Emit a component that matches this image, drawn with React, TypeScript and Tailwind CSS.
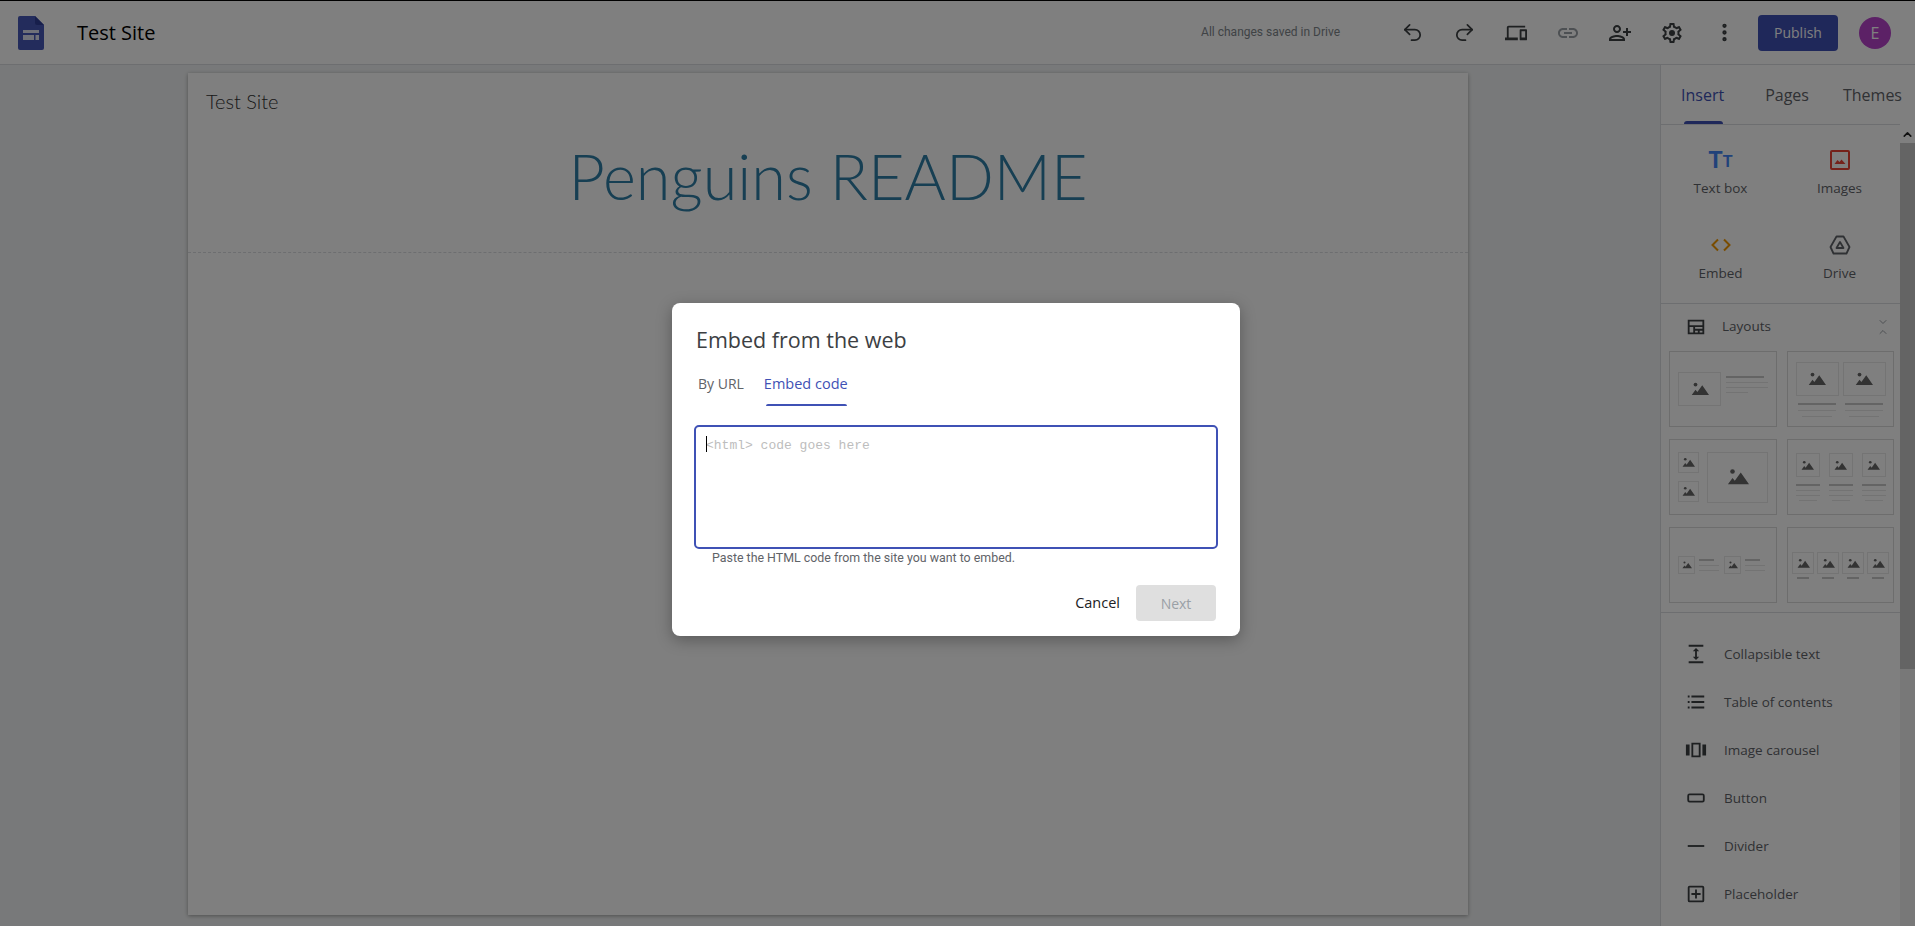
import { ReactNode } from "react";
import { Undo2, Redo2, MoreVertical, ChevronUp, ChevronDown } from "lucide-react";

const roboto = "font-['Roboto',sans-serif]";

function Mat({ d, size = 24, className = "" }: { d: string; size?: number; className?: string }) {
  return (
    <svg width={size} height={size} viewBox="0 0 24 24" fill="currentColor" className={className}>
      <path d={d} />
    </svg>
  );
}

const ICONS = {
  devices:
    "M4 6h18V4H4c-1.1 0-2 .9-2 2v11H0v3h14v-3H4V6zm19 2h-6c-.55 0-1 .45-1 1v10c0 .55.45 1 1 1h6c.55 0 1-.45 1-1V9c0-.55-.45-1-1-1zm-1 9h-4v-7h4v7z",
  link:
    "M3.9 12c0-1.71 1.39-3.1 3.1-3.1h4V7H7c-2.76 0-5 2.24-5 5s2.24 5 5 5h4v-1.9H7c-1.71 0-3.1-1.39-3.1-3.1zM8 13h8v-2H8v2zm9-6h-4v1.9h4c1.71 0 3.1 1.39 3.1 3.1s-1.39 3.1-3.1 3.1h-4V17h4c2.76 0 5-2.24 5-5s-2.24-5-5-5z",
  personAdd:
    "M15 12c2.21 0 4-1.79 4-4s-1.79-4-4-4-4 1.79-4 4 1.79 4 4 4zm0-6c1.1 0 2 .9 2 2s-.9 2-2 2-2-.9-2-2 .9-2 2-2zm0 8c-2.67 0-8 1.34-8 4v2h16v-2c0-2.66-5.33-4-8-4zm-6 4c.22-.72 3.31-2 6-2 2.7 0 5.8 1.29 6 2H9zm-3-3v-3h3v-2H6V7H4v3H1v2h3v3h2z",
  settings:
    "M19.43 12.98c.04-.32.07-.64.07-.98 0-.34-.03-.66-.07-.98l2.11-1.65c.19-.15.24-.42.12-.64l-2-3.46c-.09-.16-.26-.25-.44-.25-.06 0-.12.01-.17.03l-2.49 1c-.52-.4-1.08-.73-1.69-.98l-.38-2.65C14.46 2.18 14.25 2 14 2h-4c-.25 0-.46.18-.49.42l-.38 2.65c-.61.25-1.17.59-1.69.98l-2.49-1c-.06-.02-.12-.03-.18-.03-.17 0-.34.09-.43.25l-2 3.46c-.13.22-.07.49.12.64l2.11 1.65c-.04.32-.07.65-.07.98 0 .33.03.66.07.98l-2.11 1.65c-.19.15-.24.42-.12.64l2 3.46c.09.16.26.25.44.25.06 0 .12-.01.17-.03l2.49-1c.52.4 1.08.73 1.69.98l.38 2.65c.03.24.24.42.49.42h4c.25 0 .46-.18.49-.42l.38-2.65c.61-.25 1.17-.59 1.69-.98l2.49 1c.06.02.12.03.18.03.17 0 .34-.09.43-.25l2-3.46c.12-.22.07-.49-.12-.64l-2.11-1.65zm-1.98-1.71c.04.31.05.52.05.73 0 .21-.02.43-.05.73l-.14 1.13.89.7 1.08.84-.7 1.21-1.27-.51-1.04-.42-.9.68c-.43.32-.84.56-1.25.73l-1.06.43-.16 1.13-.2 1.35h-1.4l-.19-1.35-.16-1.13-1.06-.43c-.43-.18-.83-.41-1.23-.71l-.91-.7-1.06.43-1.27.51-.7-1.21 1.08-.84.89-.7-.14-1.13c-.03-.31-.05-.54-.05-.74s.02-.43.05-.73l.14-1.13-.89-.7-1.08-.84.7-1.21 1.27.51 1.04.42.9-.68c.43-.32.84-.56 1.25-.73l1.06-.43.16-1.13.2-1.35h1.39l.19 1.35.16 1.13 1.06.43c.43.18.83.41 1.23.71l.91.7 1.06-.43 1.27-.51.7 1.21-1.07.85-.89.7.14 1.13z",
  layouts: "M3 4h18v16H3V4zm2 2v4h14V6H5zm0 6v6h4v-6H5zm6 0v2h8v-2h-8zm0 4v2h3v-2h-3zm5 0v2h3v-2h-3z",
  collapsible: "M4 2h16v2H4V2zm0 18h16v2H4v-2zm8-14.5L15.5 9H13v6h2.5L12 18.500 8.500 15H11V9H8.500L12 5.500z",
  toc: "M7 5h14v2H7V5zm0 6h14v2H7v-2zM7 17h14v2H7v-2zM3 5h2v2H3V5zm0 6h2v2H3v-2zm0 6h2v2H3v-2z",
  carousel: "M1 6h4v12H1V6zm18 0h4v12h-4V6zM7 4h10v16H7V4zm2 2v12h6V6H9z",
  button: "M5 7h14a2.500 2.500 0 0 1 2.500 2.500v5A2.500 2.500 0 0 1 19 17H5a2.500 2.500 0 0 1-2.500-2.500v-5A2.500 2.500 0 0 1 5 7zm0 2c-.3 0-.5.2-.5.5v5c0 .3.2.5.5.5h14c.3 0 .5-.2.5-.5v-5c0-.3-.2-.5-.5-.5H5z",
  divider: "M3 11h18v2H3z",
  placeholder:
    "M5 3h14a2 2 0 0 1 2 2v14a2 2 0 0 1-2 2H5a2 2 0 0 1-2-2V5a2 2 0 0 1 2-2zm0 2v14h14V5H5zm6 2h2v4h4v2h-4v4h-2v-4H7v-2h4V7z",
};

function Mountain({ size }: { size: number }) {
  return (
    <svg width={size} height={size} viewBox="0 0 24 24" fill="#666666">
      <circle cx="6" cy="6" r="2.500" />
      <path d="M1 20l5-7 2.500 3L15 7l9 13H1z" />
    </svg>
  );
}

function Pic({ w, h, icon }: { w: number; h: number; icon: number }) {
  return (
    <div className="flex shrink-0 items-center justify-center border border-[#e8e8e8]" style={{ width: w, height: h }}>
      <Mountain size={icon} />
    </div>
  );
}

function Line({ w, dark, center }: { w: number; dark?: boolean; center?: boolean }) {
  return <div className={`${dark ? "h-[2px] bg-[#c8c8c8]" : "h-px bg-[#e6e6e6]"} ${center ? "mx-auto" : ""}`} style={{ width: w }} />;
}

function Thumb({ children, className = "" }: { children: ReactNode; className?: string }) {
  return <div className={`h-[76px] border border-[#dadada] ${className}`}>{children}</div>;
}

function ListRow({ d, label }: { d: string; label: string }) {
  return (
    <div className="flex h-[48px] items-center">
      <div className="flex w-[63px] justify-center pl-[6px] text-[#3c4043]">
        <Mat d={d} size={22} />
      </div>
      <span className="text-[13.500px] text-[#5f6368]">{label}</span>
    </div>
  );
}

function Tool({ children, label }: { children: ReactNode; label: string }) {
  return (
    <div className="flex h-[85px] flex-col items-center pt-[13px]">
      <div className="flex h-[28px] items-center justify-center">{children}</div>
      <span className="mt-[5px] text-[13.500px] leading-[18px] text-[#5f6368]">{label}</span>
    </div>
  );
}

function Sidebar() {
  return (
    <aside className="flex w-[255px] shrink-0 border-l border-[#dadce0] bg-white">
      <div className="flex min-w-0 flex-1 flex-col">
        <div className="flex h-[60px] shrink-0 items-center border-b border-[#dadce0] text-[16px] font-medium">
          <div className="relative ml-[20px] flex h-full w-[44px] items-center justify-center text-[#3f51b5]">
            Insert
            <div className="absolute bottom-0 left-[3px] h-[3px] w-[39px] rounded-t-[3px] bg-[#3f51b5]" />
          </div>
          <span className="ml-[41px] text-[#5f6368]">Pages</span>
          <span className="ml-[34px] text-[#5f6368]">Themes</span>
        </div>
        <div className="grid grid-cols-2 border-b border-[#dadce0] pr-[1px] pt-[8px]">
          <Tool label="Text box">
            <span className="flex items-end font-['Liberation_Sans',sans-serif] font-bold leading-none text-[#4285f4]">
              <span className="text-[23px] leading-[18px]">T</span>
              <span className="text-[16px] leading-[14px]">T</span>
            </span>
          </Tool>
          <Tool label="Images">
            <svg width="20" height="20" viewBox="0 0 20 20" fill="none">
              <rect x="1" y="1" width="18" height="18" rx="1" stroke="#ea4335" strokeWidth="2" />
              <path d="M4.500 14l3-4 2 2 2-2.500 4 4.500h-11z" fill="#ea4335" />
            </svg>
          </Tool>
          <Tool label="Embed">
            <svg width="22" height="16" viewBox="0 0 22 16" fill="none" stroke="#f29900" strokeWidth="2">
              <path d="M8 2.500L2.500 8 8 13.500M14 2.500L19.500 8 14 13.500" />
            </svg>
          </Tool>
          <Tool label="Drive">
            <svg width="22" height="20" viewBox="0 0 22 20" fill="none" stroke="#5f6368" strokeWidth="1.800" strokeLinejoin="round">
              <path d="M7.500 1.500h7L20.500 12l-3 6.500h-13L1.500 12z" />
              <path d="M11 7l3.500 6h-7z" />
            </svg>
          </Tool>
        </div>
        <div className="flex h-[47px] items-center pb-[2px] pl-[24px] pr-[11px]">
          <Mat d={ICONS.layouts} size={22} className="text-[#3c4043]" />
          <span className="ml-[15px] flex-1 text-[13.500px] text-[#5f6368]">Layouts</span>
          <div className="flex flex-col text-[#9aa0a6]">
            <ChevronDown size={12} className="-mb-[2px]" />
            <ChevronUp size={12} />
          </div>
        </div>
        <div className="grid grid-cols-[108px_107px] gap-x-[10px] gap-y-[12px] border-b border-[#dadce0] pb-[9px] pl-[8px]">
          <Thumb className="flex items-center gap-[5px] pl-[8px]">
            <Pic w={43} h={34} icon={18} />
            <div className="flex flex-col gap-[4px] pb-[10px]">
              <Line w={38} dark />
              <Line w={42} />
              <Line w={42} />
              <Line w={22} />
            </div>
          </Thumb>
          <Thumb className="flex justify-center gap-[4px] pt-[10px]">
            {[0, 1].map((i) => (
              <div key={i} className="flex w-[43px] flex-col gap-[5px]">
                <Pic w={43} h={34} icon={18} />
                <div className="mt-[2px]">
                  <Line w={38} dark center />
                </div>
                <Line w={38} center />
                <Line w={30} center />
              </div>
            ))}
          </Thumb>
          <Thumb className="flex items-center gap-[8px] pl-[8px]">
            <div className="flex flex-col gap-[8px]">
              <Pic w={21} h={21} icon={13} />
              <Pic w={21} h={21} icon={13} />
            </div>
            <Pic w={61} h={51} icon={22} />
          </Thumb>
          <Thumb className="flex justify-center gap-[9px] pt-[13px]">
            {[0, 1, 2].map((i) => (
              <div key={i} className="flex w-[24px] flex-col gap-[4px]">
                <Pic w={24} h={24} icon={13} />
                <div className="mt-[3px]">
                  <Line w={24} dark />
                </div>
                <Line w={24} />
                <Line w={24} />
                <Line w={18} center />
              </div>
            ))}
          </Thumb>
          <Thumb className="flex items-center gap-[5px] pl-[8px] pr-[8px]">
            {[0, 1].map((i) => (
              <div key={i} className="flex items-center gap-[4px]">
                <Pic w={17} h={18} icon={10} />
                <div className="flex w-[20px] flex-col gap-[4px]">
                  <Line w={15} dark />
                  <Line w={20} />
                  <Line w={20} />
                </div>
              </div>
            ))}
          </Thumb>
          <Thumb className="flex justify-center gap-[3px] pt-[24px]">
            {[0, 1, 2, 3].map((i) => (
              <div key={i} className="flex w-[22px] flex-col gap-[3px]">
                <Pic w={22} h={22} icon={13} />
                <Line w={12} dark center />
              </div>
            ))}
          </Thumb>
        </div>
        <div className="pt-[17px]">
          <ListRow d={ICONS.collapsible} label="Collapsible text" />
          <ListRow d={ICONS.toc} label="Table of contents" />
          <ListRow d={ICONS.carousel} label="Image carousel" />
          <ListRow d={ICONS.button} label="Button" />
          <ListRow d={ICONS.divider} label="Divider" />
          <ListRow d={ICONS.placeholder} label="Placeholder" />
        </div>
      </div>
      {/* scrollbar */}
      <div className="flex w-[15px] shrink-0 flex-col self-stretch pt-[60px]">
        <div className="flex h-[18px] items-center justify-center bg-white text-[#222]">
          <ChevronUp size={13} strokeWidth={3} />
        </div>
        <div className="h-[526px] bg-[#c8c8c8]" />
        <div className="flex-1 bg-[#f1f1f1]" />
      </div>
    </aside>
  );
}

function Header() {
  const iconBox = "flex w-[52px] justify-center text-[#3c4043]";
  return (
    <header className="flex h-[64px] shrink-0 items-center border-b border-[#dadce0] bg-white pr-[24px]">
      <svg width="26" height="34" viewBox="0 0 26 34" className="ml-[18px] shrink-0">
        <path d="M2 0h15l9 9v23a2 2 0 0 1-2 2H2a2 2 0 0 1-2-2V2a2 2 0 0 1 2-2z" fill="#4758b8" />
        <path d="M17 0l9 9h-7a2 2 0 0 1-2-2V0z" fill="#2f3f99" />
        <path d="M5 14h16v3H5zM5 19h11v5H5zM17.500 19H21v5h-3.500z" fill="#dfe2f3" />
      </svg>
      <span className="ml-[33px] whitespace-nowrap text-[20px] text-black">Test Site</span>
      <div className="flex-1" />
      <span className={`whitespace-nowrap pb-[1px] text-[12px] text-[#80868b] ${roboto}`}>All changes saved in Drive</span>
      <div className="ml-[46px] flex shrink-0 items-center">
        <div className={iconBox}><Undo2 size={23} strokeWidth={1.800} /></div>
        <div className={iconBox}><Redo2 size={23} strokeWidth={1.800} /></div>
        <div className={iconBox}><Mat d={ICONS.devices} size={22} /></div>
        <div className={`${iconBox} text-[#9aa0a6]`}><Mat d={ICONS.link} /></div>
        <div className={iconBox}><Mat d={ICONS.personAdd} className="-scale-x-100" /></div>
        <div className={iconBox}>
          <svg width="24" height="24" viewBox="0 0 24 24" fill="currentColor">
            <path d={ICONS.settings} />
            <circle cx="12" cy="12" r="3" />
          </svg>
        </div>
        <div className={iconBox}><MoreVertical size={23} strokeWidth={2.500} /></div>
      </div>
      <button className="ml-[8px] h-[36px] w-[80px] shrink-0 rounded-[4px] bg-[#3f51b5] text-[14px] font-medium text-white">Publish</button>
      <div className="ml-[21px] flex h-[32px] w-[32px] shrink-0 items-center justify-center rounded-full bg-[#b842cc] text-[16px] text-white">E</div>
    </header>
  );
}

function Dialog() {
  return (
    <div className="absolute inset-0 flex justify-center bg-black/50 pt-[302px]">
      <div className="-ml-[3px] flex h-[333px] w-[568px] flex-col rounded-[8px] bg-white px-[22px] shadow-[0_4px_16px_rgba(0,0,0,0.3)]">
        <h2 className="ml-[2px] mt-[23px] text-[21.500px] leading-[28px] text-[#3c4043]">Embed from the web</h2>
        <div className="ml-[4px] mt-[12px] flex h-[40px] text-[14px] font-medium">
          <span className="pt-[7px] text-[#5f6368]">By URL</span>
          <div className="relative ml-[20px] pt-[7px] text-[14.500px] text-[#3f51b5]">
            Embed code
            <div className="absolute bottom-0 left-[2px] right-[1px] h-[2px] rounded-t-[2px] bg-[#3f51b5]" />
          </div>
        </div>
        <div className="mt-[19px] h-[124px] w-[524px] rounded-[5px] border-2 border-[#3f51b5] px-[10px] pt-[6px] font-['Liberation_Mono',monospace] text-[13px] leading-[16px] text-[#bdbdbd]">
          <span className="-mr-px inline-block h-[16px] w-px translate-y-[3px] bg-black" />
          {"<html> code goes here"}
        </div>
        <p className={`ml-[18px] mt-[1px] text-[12.400px] leading-[16px] text-[#5f6368] ${roboto}`}>Paste the HTML code from the site you want to embed.</p>
        <div className="mt-[19px] flex items-center justify-end pr-[2px]">
          <button className="mr-[16px] text-[14.500px] font-medium text-[#202124]">Cancel</button>
          <button className="h-[36px] w-[80px] rounded-[4px] bg-[#dfdfdf] text-[14px] font-medium text-[#9aa0a6]">Next</button>
        </div>
      </div>
    </div>
  );
}

export default function App() {
  return (
    <div className="relative flex h-[926px] w-full flex-col overflow-hidden border-t border-black bg-[#f1f3f4] font-['Open_Sans',sans-serif]">
      <Header />
      <div className="flex min-h-0 flex-1">
        <main className="min-w-0 flex-1 pl-[188px] pt-[8px]">
          <div className="h-[842px] w-[1280px] bg-white shadow-[0_1px_4px_rgba(0,0,0,0.35)]">
            <div className="h-[180px] border-b border-dashed border-[#dadce0] font-['Lato',sans-serif] font-light">
              <div className="pl-[18px] pt-[14px] text-[20px] leading-[28px] text-[#333]">Test Site</div>
              <div className="mt-[25px] text-center text-[63px] leading-[72px] text-[#2f7ea6]">Penguins README</div>
            </div>
          </div>
        </main>
        <Sidebar />
      </div>
      <Dialog />
    </div>
  );
}
